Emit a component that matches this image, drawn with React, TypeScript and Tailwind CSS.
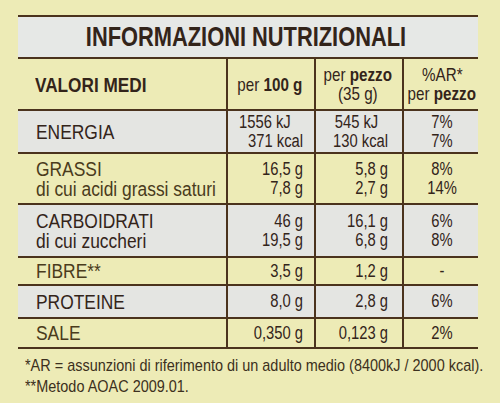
import React from 'react';

const font = "font-['Liberation_Sans',Arial,sans-serif]";
const line = 'border-[#4b331d]';

type Row = {
  label: React.ReactNode;
  c100: React.ReactNode;
  cPz: React.ReactNode;
  ar: React.ReactNode;
  bg: string;
  h: string;
};

const rows: Row[] = [
  {
    label: <div>ENERGIA</div>,
    c100: (
      <>
        <div className="pr-[15px]">1556 kJ</div>
        <div>371 kcal</div>
      </>
    ),
    cPz: (
      <>
        <div className="pr-[12px]">545 kJ</div>
        <div>130 kcal</div>
      </>
    ),
    ar: (
      <>
        <div>7%</div>
        <div>7%</div>
      </>
    ),
    bg: 'bg-[#e4e5e2]',
    h: 'h-[43px]',
  },
  {
    label: (
      <>
        <div className="text-[#4a3b1c]">GRASSI</div>
        <div className="text-[#4a3b1c]">di cui acidi grassi saturi</div>
      </>
    ),
    c100: (
      <>
        <div>16,5 g</div>
        <div>7,8 g</div>
      </>
    ),
    cPz: (
      <>
        <div>5,8 g</div>
        <div>2,7 g</div>
      </>
    ),
    ar: (
      <>
        <div>8%</div>
        <div>14%</div>
      </>
    ),
    bg: '',
    h: 'h-[51px]',
  },
  {
    label: (
      <>
        <div>CARBOIDRATI</div>
        <div>di cui zuccheri</div>
      </>
    ),
    c100: (
      <>
        <div>46 g</div>
        <div>19,5 g</div>
      </>
    ),
    cPz: (
      <>
        <div>16,1 g</div>
        <div>6,8 g</div>
      </>
    ),
    ar: (
      <>
        <div>6%</div>
        <div>8%</div>
      </>
    ),
    bg: 'bg-[#e4e5e2]',
    h: 'h-[53px]',
  },
  {
    label: <div className="text-[#4a3b1c]">FIBRE**</div>,
    c100: <div>3,5 g</div>,
    cPz: <div>1,2 g</div>,
    ar: <div>-</div>,
    bg: '',
    h: 'h-[28px]',
  },
  {
    label: <div>PROTEINE</div>,
    c100: <div>8,0 g</div>,
    cPz: <div>2,8 g</div>,
    ar: <div>6%</div>,
    bg: 'bg-[#e4e5e2]',
    h: 'h-[33px]',
  },
  {
    label: <div className="text-[#4a3b1c]">SALE</div>,
    c100: <div>0,350 g</div>,
    cPz: <div>0,123 g</div>,
    ar: <div>2%</div>,
    bg: '',
    h: 'h-[30px]',
  },
];

const grid = `grid grid-cols-[210px_88px_88px_74px] border-b-2 ${line}`;

// the label's typeface is a condensed grotesk; squeeze Liberation Sans to match
export default function App() {
  return (
    <div className={`w-[500px] h-[403px] overflow-hidden bg-[#edebb6] text-[#33241a] ${font} pt-[15px] whitespace-nowrap`}>
      <div className="ml-[18px] w-[460px]">
        {/* title band */}
        <div className={`h-[44px] border-y-2 ${line} bg-[#e6e8e6] flex items-center justify-center`}>
          <span className="inline-block text-[28px] font-bold leading-none pr-[6px] scale-x-[0.78]">INFORMAZIONI NUTRIZIONALI</span>
        </div>

        {/* header */}
        <div className={`${grid} h-[52px]`}>
          <div className={`border-r-2 ${line} flex items-center pl-[17px] pt-[2px]`}>
            <span className="inline-block text-[20px] font-bold origin-left scale-x-[0.86]">VALORI MEDI</span>
          </div>
          <div className={`border-r-2 ${line} flex items-center justify-end pr-[12px] pt-[2px]`}>
            <span className="inline-block text-[19px] origin-right scale-x-[0.8]">
              per <b>100 g</b>
            </span>
          </div>
          <div className={`border-r-2 ${line} flex flex-col items-center justify-center text-[19px] leading-[19px] pr-[2px]`}>
            <div className="scale-x-[0.8]">
              per <b>pezzo</b>
            </div>
            <div className="scale-x-[0.8]">(35 g)</div>
          </div>
          <div className="flex flex-col items-center justify-center text-[19px] leading-[19px] pl-[2px]">
            <div className="scale-x-[0.8]">%AR*</div>
            <div className="scale-x-[0.8]">
              per <b>pezzo</b>
            </div>
          </div>
        </div>

        {rows.map((r, i) => (
          <div key={i} className={`${grid} ${r.bg} ${r.h}`}>
            <div className={`border-r-2 ${line} flex flex-col justify-center pl-[18px]`}>
              <div className="text-[20px] leading-[20px] origin-left scale-x-[0.87]">{r.label}</div>
            </div>
            <div className={`border-r-2 ${line} flex flex-col justify-center items-end pr-[11px]`}>
              <div className="flex flex-col items-end text-[18px] leading-[19px] origin-right scale-x-[0.82]">{r.c100}</div>
            </div>
            <div className={`border-r-2 ${line} flex flex-col justify-center items-end pr-[14px]`}>
              <div className="flex flex-col items-end text-[18px] leading-[19px] origin-right scale-x-[0.82]">{r.cPz}</div>
            </div>
            <div className="flex flex-col justify-center items-center pl-[2px]">
              <div className="flex flex-col items-center text-[18px] leading-[19px] scale-x-[0.82]">{r.ar}</div>
            </div>
          </div>
        ))}
      </div>

      {/* footnotes */}
      <div className="pl-[25px] pt-[6px] text-[17px] leading-[21px] text-[#3c3020]">
        <div className="origin-left scale-x-[0.85]">*AR = assunzioni di riferimento di un adulto medio (8400kJ / 2000 kcal).</div>
        <div className="origin-left scale-x-[0.85]">**Metodo AOAC 2009.01.</div>
      </div>
    </div>
  );
}
